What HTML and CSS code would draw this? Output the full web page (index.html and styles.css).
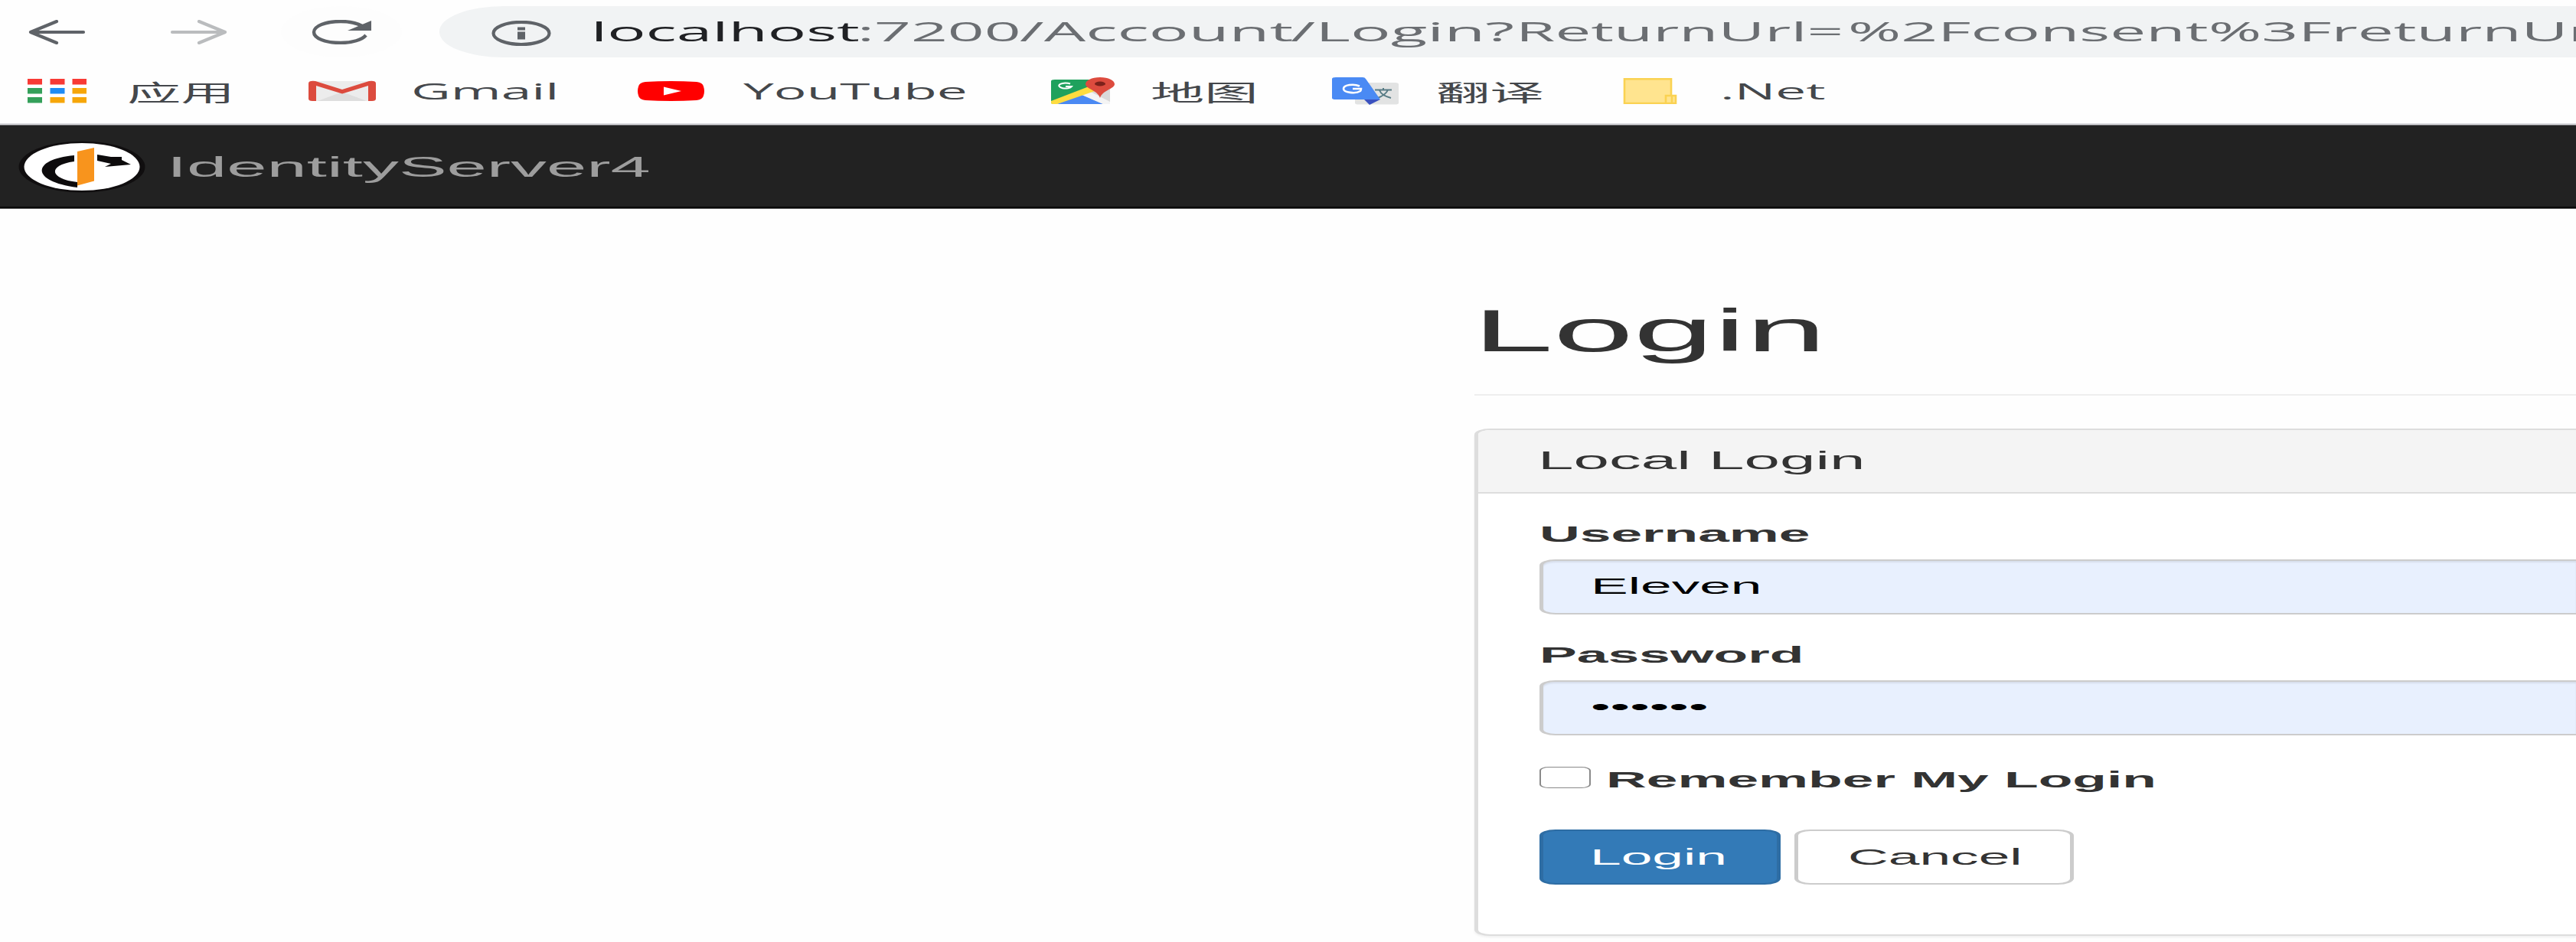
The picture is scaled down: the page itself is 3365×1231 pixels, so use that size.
FILE: index.html
```html
<!DOCTYPE html>
<html lang="zh-CN">
<head>
<meta charset="utf-8">
<title>IdentityServer4</title>
<link rel="stylesheet" href="styles.css">
</head>
<body>
<div class="toolbar">
  <svg class="nav-icon back" viewBox="0 0 76 32"><path d="M73 16H4M38 2L4 16l34 14" fill="none" stroke="#5f6368" stroke-width="4.2" stroke-linecap="round" stroke-linejoin="round"/></svg>
  <svg class="nav-icon forward" viewBox="0 0 76 32"><path d="M3 16h69M38 2l34 14-34 14" fill="none" stroke="#babcbe" stroke-width="4.2" stroke-linecap="round" stroke-linejoin="round"/></svg>
  <span class="reload"><svg class="reload-icon" viewBox="0 0 80 32" preserveAspectRatio="none"><path d="M67 8C60 4 50 2 39 2C19 2 4 8 4 16s15 14 35 14c15 0 28-4 33-10" fill="none" stroke="#5f6368" stroke-width="4.4"/><path d="M79 1v13H48z" fill="#5f6368"/></svg></span>
  <div class="address">
    <svg class="info" viewBox="0 0 80 33" preserveAspectRatio="none"><ellipse cx="40" cy="16.5" rx="36.5" ry="14.6" fill="none" stroke="#5f6368" stroke-width="4.2"/><path d="M35 8.500h10v4H35zM35 14.500h10v10H35z" fill="#5f6368"/></svg>
    <div class="url"><span class="seg host">localhost</span><span class="seg port">:7200</span><span class="seg account">/Account</span><span class="seg login">/Login?</span><span class="seg ret">ReturnUrl=</span><span class="seg consent">%2Fconsent</span><span class="seg inner">%3FreturnUrl</span></div>
  </div>
</div>
<div class="bookmarks">
  <div class="bm apps"><svg class="bm-icon" width="77" height="32" viewBox="0 0 77 32"><path d="M0 0h19v7.500H0zM29.500 0h19v7.500h-19zM58.500 0h18.500v7.500H58.500z" fill="#f83a35"/><path d="M0 12h19v7.500H0zM0 24h19v7.500H0z" fill="#34a05a"/><path d="M29.500 12h19v7.500h-19z" fill="#1e8cf5"/><path d="M58.500 12h18.500v7.500H58.500zM29.500 24h19v7.500h-19zM58.500 24h18.500v7.500H58.500z" fill="#f6a609"/></svg><span class="txt cjk">应用</span></div>
  <div class="bm gmail"><svg class="bm-icon" width="88" height="28" viewBox="0 0 88 28"><path d="M6 1h76v26H6z" fill="#ececec"/><path d="M12 27l32-12 32 12z" fill="#dedede"/><path d="M0 4Q0 0 9 1L44 12 79 1Q88 0 88 4V24Q88 27 83 27H78V7L44 17.500 10 7V27H5Q0 27 0 24z" fill="#dc4b3e"/></svg><span class="txt">Gmail</span></div>
  <div class="bm youtube"><svg class="bm-icon" width="87" height="26" viewBox="0 0 87 26"><path d="M10 1Q43 -1 77 1Q85 2 86 7Q88 13 86 19Q85 24 77 25Q43 27 10 25Q2 24 1 19Q-1 13 1 7Q2 2 10 1z" fill="#f00"/><path d="M34 7.500L57 13 34 18.500z" fill="#fff"/></svg><span class="txt">YouTube</span></div>
  <div class="bm maps"><svg class="bm-icon" width="84" height="35" viewBox="0 0 84 35"><rect y="3" width="77" height="32" rx="5" ry="2" fill="#1fa15d"/><path d="M40 20L77 5v30H5z" fill="#d9d9d9"/><path d="M8 35L38 22l30 13z" fill="#4a89f3"/><path d="M38 22l10-5 29 15v3h-9z" fill="#f4f4f4"/><path d="M0 31L52 11l8 6L8 35H2q-2 0-2-2z" fill="#fedc3f"/><path d="M25 8.500A8.500 3.600 0 1 0 27 12h-8" fill="none" stroke="#fff" stroke-width="2"/><path d="M64 0C53 0 45 4 45 9c0 6 16 8 19 18C67 17 83 15 83 9 83 4 75 0 64 0z" fill="#dd4b3e"/><ellipse cx="64" cy="8.500" rx="7" ry="3" fill="#7c211b"/></svg><span class="txt cjk">地图</span></div>
  <div class="bm translate"><svg class="bm-icon" width="88" height="36" viewBox="0 0 88 36"><rect x="30" y="7" width="57" height="28.500" rx="5" ry="2" fill="#e2e3e3"/><path d="M56 16.500h22M67 14v2.500M73 16.500c-2 5-7 8-14 11M62 17c2 5 7 8 15 10" fill="none" stroke="#577b85" stroke-width="2"/><path d="M5 0h35q3 0 4 2l19 27H5q-5 0-5-2V2q0-2 5-2z" fill="#4a8af4"/><path d="M42 29h21l-14 7z" fill="#3a51c0"/><path d="M36 11.500C28 8 15 10 15 15s16 7 22 3q1-1 1-3H27" fill="none" stroke="#fff" stroke-width="2.600"/></svg><span class="txt cjk">翻译</span></div>
  <div class="bm net"><svg class="bm-icon" width="72" height="34" viewBox="0 0 72 34"><path d="M1 1h62v21h7v11H1z" fill="#ffe48f"/><path d="M2 1.300h61v21.700h6v10H2zM56 33V23h8v10" fill="none" stroke="#fad252" stroke-width="2.600"/></svg><span class="txt">.Net</span></div>
</div>
<nav class="navbar">
  <svg class="logo" viewBox="0 0 168 68"><ellipse cx="84" cy="34" rx="82.500" ry="33.500" fill="#100e0f"/><ellipse cx="84" cy="34" rx="75.500" ry="31" fill="#fff"/><path d="M74 19C18 24 16 53 78 61V54C42 50 38 32 74 27z" fill="#0d0b0c"/><path d="M104 18l18 3h14v4l12 6-34 3 8-4-18-4z" fill="#0d0b0c"/><path d="M78 14l22-5v43.500L78 58.500z" fill="#f8941d"/></svg>
  <span class="txt brand">IdentityServer4</span>
</nav>
<main class="page">
  <header class="page-header"><h1 class="txt title">Login</h1></header>
  <section class="panel">
    <div class="panel-heading"><h3 class="txt panel-title">Local Login</h3></div>
    <form class="panel-body">
      <div class="group">
        <label class="txt label">Username</label>
        <div class="field"><span class="txt">Eleven</span></div>
      </div>
      <div class="group">
        <label class="txt label">Password</label>
        <div class="field"><span class="txt">••••••</span></div>
      </div>
      <div class="remember"><span class="checkbox"></span><label class="txt label">Remember My Login</label></div>
      <div class="actions">
        <div class="btn primary"><span class="txt">Login</span></div>
        <div class="btn plain"><span class="txt">Cancel</span></div>
      </div>
    </form>
  </section>
</main>
</body>
</html>
```
FILE: styles.css
```css
* { box-sizing: border-box; }
html, body { margin: 0; height: 1231px; overflow: hidden; }
body {
  width: 3365px;
  display: flex;
  flex-direction: column;
  background: #fefefe;
  color: #333;
  font: 29.3px/42px "Liberation Sans", Arial, sans-serif;
}
svg { display: block; flex: none; }

/* Wide lettering: text is stretched from its left edge */
.txt {
  display: block;
  width: max-content;
  white-space: nowrap;
  transform: scaleX(2.495);
  transform-origin: 0 50%;
}

.toolbar { height: 83px; display: flex; align-items: center; padding-left: 36px; flex: none; }
.nav-icon { width: 76px; height: 32px; }
.forward { margin-left: 110px; }
.reload {
  width: 158px; height: 67px; margin-left: 69px;
  border-radius: 50%; background: #fdfdfd;
  display: flex; align-items: center; justify-content: center;
}
.reload-icon { width: 80px; height: 32px; }
.address {
  flex: 1; height: 67px; margin-left: 49px; padding-left: 67px;
  display: flex; align-items: center;
  background: #f1f3f4; border-radius: 84px 0 0 84px / 33px 0 0 33px;
  overflow: hidden;
}
.info { width: 80px; height: 33px; margin-top: 3px; }
.url {
  display: flex; flex: none; margin: 0 0 3px 51px;
  font: 35.5px/50px "Open Sans", "Noto Sans", sans-serif; color: #6b6e72;
}
.seg { white-space: nowrap; flex: none; transform: scaleX(2.36); transform-origin: 0 50%; }
.host { width: 348px; color: #202124; }
.port { width: 212px; }
.account { width: 354px; transform: scaleX(2.43); }
.login { width: 294px; transform: scaleX(2.47); }
.ret { width: 434px; transform: scaleX(2.35); }
.consent { width: 471px; }
.inner { width: 400px; }

.bookmarks {
  height: 80px; flex: none; display: flex; align-items: center;
  padding-bottom: 7px; border-bottom: 2px solid #dadade;
  font: 29.3px/40px "Open Sans", "Noto Sans", "Noto Sans CJK SC", sans-serif; color: #44474b;
}
.bm { display: flex; align-items: center; height: 70px; flex: none; }
.bm .txt { transform: scaleX(2.43); }
.bm .cjk { font-family: "Noto Sans CJK SC", sans-serif; transform: scaleX(2.4); }
.apps { margin-left: 36px; width: 367px; }
.apps .txt { margin-left: 53px; }
.gmail { width: 430px; }
.gmail .txt { margin-left: 46px; }
.youtube { width: 540px; }
.youtube .txt { margin-left: 51px; }
.maps { width: 367px; }
.maps .txt { margin-left: 46px; }
.translate { width: 380px; }
.translate .txt { margin-left: 48px; }
.net .txt { margin-left: 55px; }

.navbar {
  height: 110px; flex: none; display: flex; align-items: center;
  padding: 0 0 1px 23px; background: #222;
  border-top: 1px solid #77777b; border-bottom: 1px solid #555;
  box-shadow: inset 0 -2px #080808;
}
.logo { width: 168px; height: 68px; }
.brand { margin-left: 27px; font-size: 37.6px; line-height: 44px; color: #9d9d9d; transform: scaleX(2.5); }

.page { margin-left: 1926px; flex: none; }
.page-header { height: 244px; padding-top: 117px; border-bottom: 2px solid #eee; }
.title { margin: 0 0 0 -2px; font-size: 77px; line-height: 84px; font-weight: 400; transform: scaleX(2.45); }
.panel {
  margin-top: 43px; height: 663px; background: #fff;
  border: solid #ddd; border-width: 2px 0 2px 5px;
  border-radius: 21px 0 0 21px / 8px 0 0 8px;
  box-shadow: 0 2px 3px rgba(0, 0, 0, .06); overflow: hidden;
}
.panel-heading { height: 83px; padding: 19px 0 0 78px; background: #f4f4f4; border-bottom: 2px solid #ddd; }
.panel-title { margin: 0; font-size: 33.5px; line-height: 42px; font-weight: 400; }
.panel-body { margin: 0; padding: 31px 0 0 80px; }
.group { height: 158px; padding-top: 1px; }
.label { font-weight: 700; }
.field {
  height: 72px; margin-top: 12px; padding: 12px 0 0 62px; color: #000;
  background: #e8f0fe; border: solid #ccc; border-width: 2px 0 2px 5px;
  border-radius: 21px 0 0 21px / 8px 0 0 8px;
  box-shadow: inset 0 2px 2px rgba(0, 0, 0, .075);
}
.remember { display: flex; height: 46px; margin-top: 10px; line-height: 34px; }
.checkbox {
  width: 67px; height: 28px; margin-right: 20px;
  border: solid #8a8a8a; border-width: 1.500px 2.500px; border-radius: 12px / 5px; background: #fff;
}
.actions { display: flex; gap: 18px; margin-top: 36px; }
.btn { height: 72px; padding: 13px 0 0 65px; border: solid #ccc; border-width: 2px 5px; border-radius: 21px / 8px; background: #fff; }
.primary { width: 315px; padding-left: 61px; background: #337ab7; border-color: #2e6da4; color: #fff; }
.plain { width: 365px; }
```
